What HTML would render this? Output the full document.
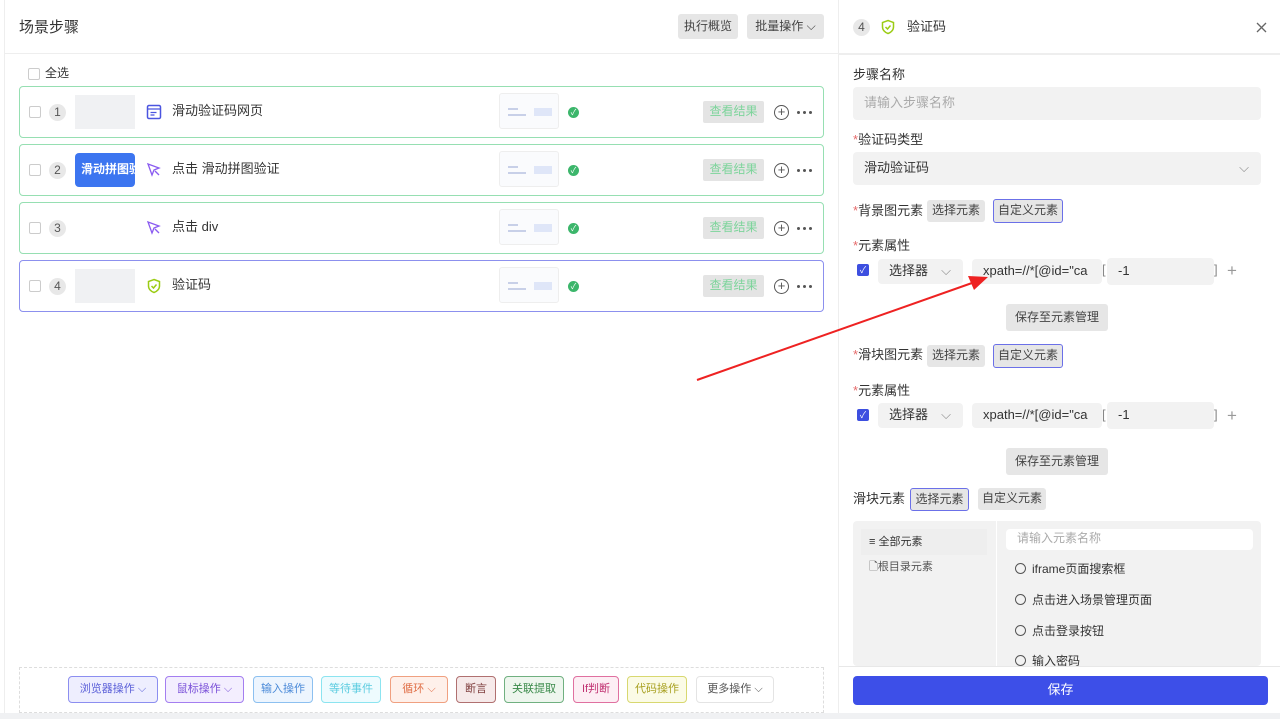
<!DOCTYPE html>
<html><head><meta charset="utf-8"><style>
*{box-sizing:border-box;margin:0;padding:0}
body{width:1280px;height:719px;position:relative;overflow:hidden;background:#fff;font-family:"Liberation Sans","Noto Sans CJK SC",sans-serif;color:#333;font-size:13px;line-height:1.15}
.a{position:absolute}
.btn{position:absolute;background:#e6e6e6;border-radius:3px;font-size:12px;color:#444;display:flex;align-items:center;justify-content:center}
.card{position:absolute;left:19px;width:805px;height:52px;border:1.5px solid #96dfb2;border-radius:4px}
.cb{position:absolute;width:12px;height:12px;border:1px solid #ccc;border-radius:2px;background:#fff}
.num{position:absolute;width:17px;height:17px;border-radius:50%;background:#e8e8e8;font-size:12px;color:#555;display:flex;align-items:center;justify-content:center}
.thumb{position:absolute;left:479px;top:6px;width:60px;height:36px;border:1px solid #eee;border-radius:3px;background:#fafbfd;overflow:hidden}
.thumb i{position:absolute;display:block;height:2px;background:#c8d0e8}
.ok{position:absolute;left:548px;top:20px;width:11px;height:11px;border-radius:50%;background:#3cb66b;color:#fff;font-size:8px;text-align:center;line-height:11px}
.vr{position:absolute;left:683px;top:14px;width:61px;height:22px;background:#e4e4e4;border-radius:2px;color:#7dd49b;font-size:12px;display:flex;align-items:center;justify-content:center}
.plus{position:absolute;left:754px;top:18px;width:15px;height:15px;border:1.3px solid #555;border-radius:50%;font-size:13px;line-height:12px;text-align:center;color:#555}
.dots{position:absolute;left:777px;top:24px;width:16px;height:3px}
.dots b{position:absolute;width:3px;height:3px;border-radius:50%;background:#555;top:0}
.lab{position:absolute;left:853px;font-size:13px;color:#333}
.star{color:#e56a6a}
.inp{position:absolute;background:#f2f2f2;border-radius:4px;font-size:13px;display:flex;align-items:center;padding-left:11px}
.tag{position:absolute;top:676px;height:27px;border-radius:4px;font-size:11px;display:flex;align-items:center;justify-content:center;border:1.5px solid}
.t{position:absolute;top:17px;left:152px}
</style></head><body>
<div class="a" style="left:4px;top:0;width:1px;height:719px;background:#eee"></div>
<div class="a" style="left:19px;top:19px;font-size:15px;color:#333">场景步骤</div>
<div class="btn" style="left:678px;top:14px;width:60px;height:25px">执行概览</div>
<div class="btn" style="left:747px;top:14px;width:77px;height:25px">批量操作 ⌵</div>
<div class="a" style="left:4px;top:53px;width:834px;height:1px;background:#eee"></div>
<div class="a" style="left:838px;top:0;width:1px;height:719px;background:#eee"></div>
<div class="cb" style="left:28px;top:68px"></div>
<div class="a" style="left:45px;top:67px;font-size:12px">全选</div>

<div class="card" style="top:86px"><div class="cb" style="left:9px;top:19px"></div><div class="num" style="left:29px;top:17px">1</div>
<div class="a" style="left:55px;top:8px;width:60px;height:34px;background:#f0f1f3"></div>
<svg class="a" style="left:126px;top:17px" width="16" height="16" viewBox="0 0 16 16"><rect x="1.5" y="1.5" width="13" height="13" rx="1.5" fill="none" stroke="#4b55e0" stroke-width="1.5"/><path d="M1.5 5h13M4.5 8.5h6M4.5 11h4" stroke="#4b55e0" stroke-width="1.3"/></svg>
<div class="t">滑动验证码网页</div>
<div class="thumb"><i style="left:8px;top:14px;width:10px"></i><i style="left:8px;top:20px;width:18px"></i><i style="left:34px;top:14px;width:18px;height:8px;background:#dfe6f8"></i></div><div class="ok">✓</div><div class="vr">查看结果</div><div class="plus">+</div><div class="dots"><b style="left:0"></b><b style="left:6px"></b><b style="left:12px"></b></div></div>

<div class="card" style="top:144px"><div class="cb" style="left:9px;top:19px"></div><div class="num" style="left:29px;top:17px">2</div>
<div class="a" style="left:55px;top:8px;width:60px;height:34px;background:#3c75f0;border-radius:4px;color:#fff;font-weight:bold;font-size:12px;overflow:hidden;white-space:nowrap;padding:10px 0 0 6px">滑动拼图验</div>
<svg class="a" style="left:126px;top:17px" width="16" height="16" viewBox="0 0 16 16"><path d="M2 2l11 4-5 2-2 5z" fill="none" stroke="#8a5bf0" stroke-width="1.3"/><path d="M9 9l4 4" stroke="#8a5bf0" stroke-width="1.3"/></svg>
<div class="t">点击 滑动拼图验证</div>
<div class="thumb"><i style="left:8px;top:14px;width:10px"></i><i style="left:8px;top:20px;width:18px"></i><i style="left:34px;top:14px;width:18px;height:8px;background:#dfe6f8"></i></div><div class="ok">✓</div><div class="vr">查看结果</div><div class="plus">+</div><div class="dots"><b style="left:0"></b><b style="left:6px"></b><b style="left:12px"></b></div></div>

<div class="card" style="top:202px"><div class="cb" style="left:9px;top:19px"></div><div class="num" style="left:29px;top:17px">3</div>
<svg class="a" style="left:126px;top:17px" width="16" height="16" viewBox="0 0 16 16"><path d="M2 2l11 4-5 2-2 5z" fill="none" stroke="#8a5bf0" stroke-width="1.3"/><path d="M9 9l4 4" stroke="#8a5bf0" stroke-width="1.3"/></svg>
<div class="t">点击 div</div>
<div class="thumb"><i style="left:8px;top:14px;width:10px"></i><i style="left:8px;top:20px;width:18px"></i><i style="left:34px;top:14px;width:18px;height:8px;background:#dfe6f8"></i></div><div class="ok">✓</div><div class="vr">查看结果</div><div class="plus">+</div><div class="dots"><b style="left:0"></b><b style="left:6px"></b><b style="left:12px"></b></div></div>

<div class="card" style="top:260px;border-color:#8c90ee"><div class="cb" style="left:9px;top:19px"></div><div class="num" style="left:29px;top:17px">4</div>
<div class="a" style="left:55px;top:8px;width:60px;height:34px;background:#f0f1f3"></div>
<svg class="a" style="left:126px;top:17px" width="16" height="16" viewBox="0 0 16 16"><path d="M8 1.5l5.5 2v4.5c0 3-2.5 5.5-5.5 6.5-3-1-5.5-3.5-5.5-6.5V3.5z" fill="none" stroke="#9bcc14" stroke-width="1.5"/><path d="M5.5 8l2 2 3-3.5" fill="none" stroke="#9bcc14" stroke-width="1.5"/></svg>
<div class="t">验证码</div>
<div class="thumb"><i style="left:8px;top:14px;width:10px"></i><i style="left:8px;top:20px;width:18px"></i><i style="left:34px;top:14px;width:18px;height:8px;background:#dfe6f8"></i></div><div class="ok">✓</div><div class="vr">查看结果</div><div class="plus">+</div><div class="dots"><b style="left:0"></b><b style="left:6px"></b><b style="left:12px"></b></div></div>

<div class="a" style="left:19px;top:667px;width:805px;height:46px;border:1px dashed #ddd"></div>
<div class="tag" style="left:68px;width:90px;border-color:#8c8ef0;background:#eeeefe;color:#5a5fd8">浏览器操作 ⌵</div>
<div class="tag" style="left:165px;width:79px;border-color:#a47ef0;background:#f3eefe;color:#7a50d8">鼠标操作 ⌵</div>
<div class="tag" style="left:253px;width:60px;border-color:#8cc0f0;background:#edf5fe;color:#4a8ad8">输入操作</div>
<div class="tag" style="left:321px;width:60px;border-color:#8ce4f0;background:#eefbfe;color:#5ccce0">等待事件</div>
<div class="tag" style="left:390px;width:58px;border-color:#f0a080;background:#fef0ea;color:#e07048">循环 ⌵</div>
<div class="tag" style="left:456px;width:40px;border-color:#b07070;background:#f6eaea;color:#804040">断言</div>
<div class="tag" style="left:504px;width:60px;border-color:#70b080;background:#eef6ee;color:#3a8a4a">关联提取</div>
<div class="tag" style="left:573px;width:46px;border-color:#e070a0;background:#fdeef4;color:#c03070">If判断</div>
<div class="tag" style="left:627px;width:60px;border-color:#d8d870;background:#fbfbe6;color:#a8a020">代码操作</div>
<div class="tag" style="left:696px;width:78px;border-color:#e4e4e4;background:#fff;color:#555">更多操作 ⌵</div>
<div class="a" style="left:0;top:713px;width:1280px;height:6px;background:#f0f1f3"></div>

<!-- right -->
<div class="num" style="left:853px;top:19px;background:#e8e8e8">4</div>
<svg class="a" style="left:880px;top:19px" width="16" height="16" viewBox="0 0 16 16"><path d="M8 1.5l5.5 2v4.5c0 3-2.5 5.5-5.5 6.5-3-1-5.5-3.5-5.5-6.5V3.5z" fill="none" stroke="#9bcc14" stroke-width="1.5"/><path d="M5.5 8l2 2 3-3.5" fill="none" stroke="#9bcc14" stroke-width="1.5"/></svg>
<div class="a" style="left:907px;top:20px">验证码</div>
<svg class="a" style="left:1256px;top:22px" width="11" height="11" viewBox="0 0 11 11"><path d="M1 1l9 9M10 1l-9 9" stroke="#666" stroke-width="1.3"/></svg>
<div class="a" style="left:839px;top:53px;width:441px;height:2px;background:#eee"></div>
<div class="lab" style="top:68px">步骤名称</div>
<div class="inp" style="left:853px;top:87px;width:408px;height:33px;color:#aaa">请输入步骤名称</div>
<div class="lab" style="top:133px"><span class="star">*</span>验证码类型</div>
<div class="inp" style="left:853px;top:152px;width:408px;height:33px">滑动验证码<span style="position:absolute;right:12px;color:#888">⌵</span></div>
<div class="lab" style="top:204px"><span class="star">*</span>背景图元素</div>
<div class="btn" style="left:927px;top:200px;width:58px;height:22px">选择元素</div>
<div class="btn" style="left:993px;top:199px;width:70px;height:24px;border:1.3px solid #6b70e8">自定义元素</div>
<div class="lab" style="top:239px"><span class="star">*</span>元素属性</div>
<div class="a" style="left:857px;top:264px;width:12px;height:12px;background:#3d4fe0;border-radius:2px;color:#fff;font-size:9px;text-align:center;line-height:12px">✓</div>
<div class="inp" style="left:878px;top:259px;width:85px;height:25px">选择器<span style="position:absolute;right:12px;color:#888">⌵</span></div>
<div class="inp" style="left:972px;top:259px;width:130px;height:25px;overflow:hidden;white-space:nowrap">xpath=//*[@id="ca</div>
<div class="a" style="left:1102px;top:263px;color:#888">[</div>
<div class="inp" style="left:1107px;top:258px;width:107px;height:27px">-1</div>
<div class="a" style="left:1214px;top:263px;color:#888">]</div>
<div class="a" style="left:1227px;top:261px;color:#999;font-size:17px">+</div>
<div class="btn" style="left:1006px;top:304px;width:102px;height:27px;font-size:12px">保存至元素管理</div>

<div class="lab" style="top:348px"><span class="star">*</span>滑块图元素</div>
<div class="btn" style="left:927px;top:345px;width:58px;height:22px">选择元素</div>
<div class="btn" style="left:993px;top:344px;width:70px;height:24px;border:1.3px solid #6b70e8">自定义元素</div>
<div class="lab" style="top:384px"><span class="star">*</span>元素属性</div>
<div class="a" style="left:857px;top:409px;width:12px;height:12px;background:#3d4fe0;border-radius:2px;color:#fff;font-size:9px;text-align:center;line-height:12px">✓</div>
<div class="inp" style="left:878px;top:403px;width:85px;height:25px">选择器<span style="position:absolute;right:12px;color:#888">⌵</span></div>
<div class="inp" style="left:972px;top:403px;width:130px;height:25px;overflow:hidden;white-space:nowrap">xpath=//*[@id="ca</div>
<div class="a" style="left:1102px;top:408px;color:#888">[</div>
<div class="inp" style="left:1107px;top:402px;width:107px;height:27px">-1</div>
<div class="a" style="left:1214px;top:408px;color:#888">]</div>
<div class="a" style="left:1227px;top:406px;color:#999;font-size:17px">+</div>
<div class="btn" style="left:1006px;top:448px;width:102px;height:27px;font-size:12px">保存至元素管理</div>

<div class="lab" style="top:492px">滑块元素</div>
<div class="btn" style="left:910px;top:488px;width:59px;height:23px;border:1.3px solid #6b70e8">选择元素</div>
<div class="btn" style="left:978px;top:488px;width:68px;height:22px">自定义元素</div>
<div class="a" style="left:853px;top:521px;width:408px;height:145px;background:#f2f2f2;border-radius:4px;overflow:hidden">
 <div class="a" style="left:143px;top:0;width:1px;height:145px;background:#fff"></div>
 <div class="a" style="left:8px;top:8px;width:126px;height:26px;background:#eeeeee;font-size:11px;padding:7px 0 0 8px">≡ 全部元素</div>
 <div class="a" style="left:16px;top:40px;font-size:11px;color:#555">🗋根目录元素</div>
 <div class="a" style="left:153px;top:8px;width:247px;height:21px;background:#fff;border-radius:4px;color:#aaa;font-size:12px;padding:3px 0 0 11px">请输入元素名称</div>
 <div class="a" style="left:162px;top:42px;font-size:12px"><span style="display:inline-block;width:11px;height:11px;border:1.5px solid #555;border-radius:50%;margin-right:6px;vertical-align:-1px"></span>iframe页面搜索框</div>
 <div class="a" style="left:162px;top:73px;font-size:12px"><span style="display:inline-block;width:11px;height:11px;border:1.5px solid #555;border-radius:50%;margin-right:6px;vertical-align:-1px"></span>点击进入场景管理页面</div>
 <div class="a" style="left:162px;top:104px;font-size:12px"><span style="display:inline-block;width:11px;height:11px;border:1.5px solid #555;border-radius:50%;margin-right:6px;vertical-align:-1px"></span>点击登录按钮</div>
 <div class="a" style="left:162px;top:134px;font-size:12px"><span style="display:inline-block;width:11px;height:11px;border:1.5px solid #555;border-radius:50%;margin-right:6px;vertical-align:-1px"></span>输入密码</div>
</div>
<div class="a" style="left:839px;top:666px;width:441px;height:1px;background:#e8e8e8"></div>
<div class="a" style="left:853px;top:676px;width:415px;height:29px;background:#3d4fe8;border-radius:4px;color:#fff;font-size:13px;display:flex;align-items:center;justify-content:center">保存</div>

<svg class="a" style="left:0;top:0" width="1280" height="719"><line x1="697" y1="380" x2="972" y2="283" stroke="#ee2222" stroke-width="2"/><path d="M988 277 L968 276 L974 290 Z" fill="#ee2222"/></svg>
</body></html>
